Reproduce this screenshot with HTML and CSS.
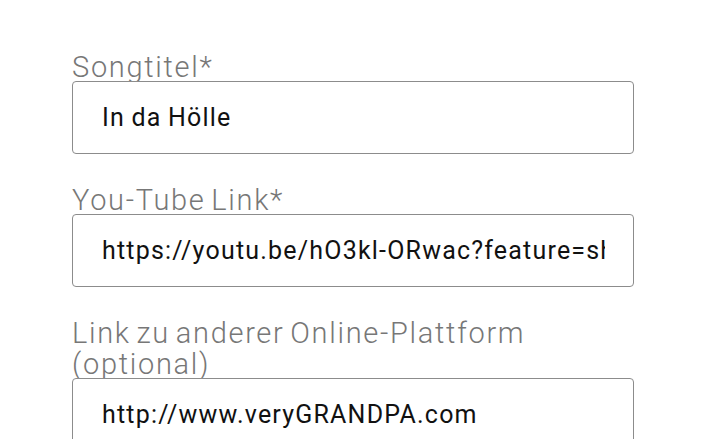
FILE: index.html
```html
<!DOCTYPE html>
<html lang="de">
<head>
  <meta charset="UTF-8" />
  <title>Song einreichen</title>
  <link rel="stylesheet" href="styles.css">
</head>
<body>

  <form class="song-form">
    <div class="field">
      <label for="title">Songtitel*</label>
      <input type="text" id="title" name="title" value="In da Hölle" readonly>
    </div>

    <div class="field">
      <label for="youtube">You-Tube Link*</label>
      <input type="text" id="youtube" name="youtube" value="https://youtu.be/hO3kl-ORwac?feature=share" readonly>
    </div>

    <div class="field">
      <label for="other">Link zu anderer Online-Plattform (optional)</label>
      <input type="text" id="other" name="other" value="http://www.veryGRANDPA.com" readonly>
    </div>
  </form>

</body>
</html>
```

FILE: styles.css
```css
body {
  margin: 0;
  background-color: #fff;
  font-family: Roboto, "Liberation Sans", sans-serif;
}
.song-form {
  padding: 52px 72px 0;
  display: flex;
  flex-direction: column;
  gap: 31px;
}
.field {
  display: flex;
  flex-direction: column;
}
label {
  font-size: 29px;
  font-weight: 300;
  line-height: 31px;
  letter-spacing: 1.7px;
  word-spacing: -3px;
  color: #777;
  margin-bottom: -2px;
  padding-right: 40px;
}
input[type="text"] {
  box-sizing: border-box;
  width: 100%;
  height: 73px;
  margin: 0;
  padding: 0 28px 0 29px;
  border: 1.5px solid #8c8c8c;
  border-radius: 4px;
  background: #fff;
  font-family: Roboto, "Liberation Sans", sans-serif;
  font-size: 25px;
  letter-spacing: 1.2px;
  word-spacing: -1px;
  color: #111;
  outline: none;
}
```
